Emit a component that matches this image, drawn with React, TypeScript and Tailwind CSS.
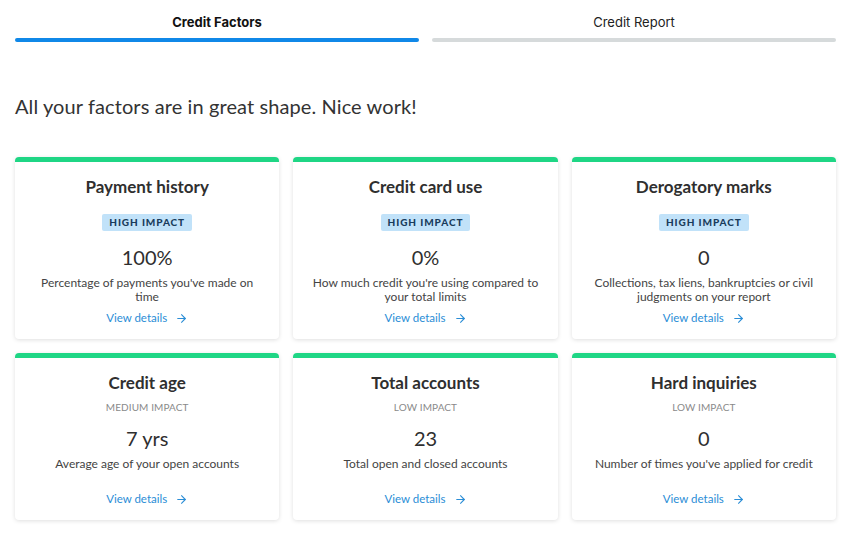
import { ArrowRight } from 'lucide-react';

type Factor = {
    title: string;
    impact: string;
    high: boolean;
    value: string;
    description: string;
};

const factors: Factor[] = [
    { title: 'Payment history', impact: 'HIGH IMPACT', high: true, value: '100%', description: "Percentage of payments you've made on time" },
    { title: 'Credit card use', impact: 'HIGH IMPACT', high: true, value: '0%', description: "How much credit you're using compared to your total limits" },
    { title: 'Derogatory marks', impact: 'HIGH IMPACT', high: true, value: '0', description: 'Collections, tax liens, bankruptcies or civil judgments on your report' },
    { title: 'Credit age', impact: 'MEDIUM IMPACT', high: false, value: '7 yrs', description: 'Average age of your open accounts' },
    { title: 'Total accounts', impact: 'LOW IMPACT', high: false, value: '23', description: 'Total open and closed accounts' },
    { title: 'Hard inquiries', impact: 'LOW IMPACT', high: false, value: '0', description: "Number of times you've applied for credit" },
];

const FactorCard = ({ factor }: { factor: Factor }) => (
    <div className="flex flex-col items-center bg-white rounded-[4px] overflow-hidden shadow-[0_1px_4px_rgba(0,0,0,0.13)] text-center">
        {/* Status bar */}
        <div className="h-[5px] w-full bg-[#1fd685] self-stretch" />

        <h3 className="mt-[13px] text-[17px] leading-6 font-bold text-[#2f2f2f]">{factor.title}</h3>

        {factor.high ? (
            <span className="mt-[15px] h-[17px] px-[7px] flex items-center rounded-[2px] bg-[#c1e2f9] text-[10px] font-black tracking-[0.09em] text-[#193c5c]">
                {factor.impact}
            </span>
        ) : (
            <span className="mt-[5px] h-[14px] leading-[14px] text-[10px] text-[#8a8a8a] tracking-[0.01em]">
                {factor.impact}
            </span>
        )}

        <div className={`${factor.high ? 'mt-[12px]' : 'mt-[10px]'} text-[20px] leading-7 text-[#2f2f2f]`}>
            {factor.value}
        </div>

        <p className="mt-[5px] px-4 min-h-[28px] text-[12px] leading-[14px] text-[#444]">{factor.description}</p>

        <a className="mt-[6px] mb-[13px] flex items-center gap-[8px] text-[11.5px] leading-4 text-[#2a8dd6]">
            View details
            <ArrowRight size={13} strokeWidth={2} />
        </a>
    </div>
);

export default function App() {
    return (
        <div className="min-h-screen bg-white font-['Lato',sans-serif]">
            <div className="ml-[15px] w-[821px]">
                {/* Tabs */}
                <div className="grid grid-cols-2 gap-[13px]">
                    <button className="flex flex-col items-center pt-[12px]">
                        <span className="text-[13px] leading-5 font-bold text-[#111] font-['Inter',sans-serif]">Credit Factors</span>
                        <span className="mt-[6px] h-[4px] w-full rounded-full bg-[#1088e8]" />
                    </button>
                    <button className="flex flex-col items-center pt-[12px]">
                        <span className="text-[13px] leading-5 text-[#222] font-['Inter',sans-serif]">Credit Report</span>
                        <span className="mt-[6px] h-[4px] w-full rounded-full bg-[#d6dadb]" />
                    </button>
                </div>

                <h2 className="mt-[50px] text-[20px] leading-7 text-[#333] tracking-[0.005em]">All your factors are in great shape. Nice work!</h2>

                {/* Factor cards */}
                <div className="mt-[37px] grid grid-cols-3 gap-[14px] items-start">
                    {factors.map((factor) => (
                        <FactorCard key={factor.title} factor={factor} />
                    ))}
                </div>
            </div>
        </div>
    );
}
